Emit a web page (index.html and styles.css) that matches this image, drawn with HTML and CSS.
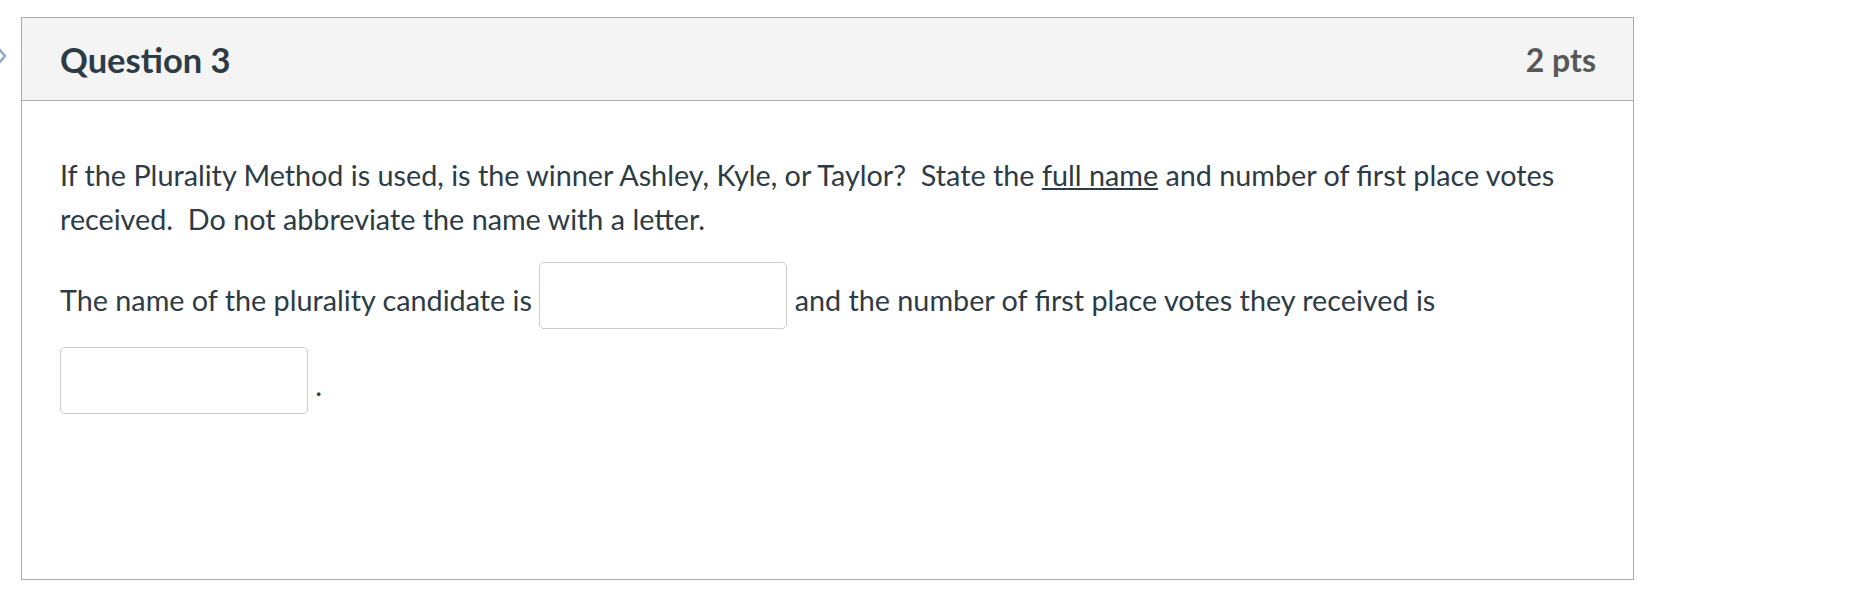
FILE: index.html
```html
<!DOCTYPE html>
<html lang="en">
<head>
<meta charset="utf-8">
<title>Question 3</title>
<link rel="stylesheet" href="styles.css">
</head>
<body>
<div class="page">
  <svg class="nav-chevron" width="14" height="22" viewBox="0 0 14 22" aria-hidden="true">
    <path d="M3 3 L10 11 L3 19" fill="none" stroke="#8fa8c4" stroke-width="2.6" stroke-linecap="round" stroke-linejoin="round"/>
  </svg>
  <div class="question">
    <div class="question-header">
      <span class="question-name">Question 3</span>
      <span class="question-points">2 pts</span>
    </div>
    <div class="question-text">
      <p class="para">If the Plurality Method is used, is the winner Ashley, Kyle, or Taylor?&nbsp; State the <u>full name</u> and number of first place votes received.&nbsp; Do not abbreviate the name with a letter.</p>
      <p class="para para-inputs">The name of the plurality candidate is <input class="blank" type="text" aria-label="Blank 1"> and the number of first place votes they received is <input class="blank" type="text" aria-label="Blank 2"> .</p>
    </div>
  </div>
</div>
</body>
</html>
```
FILE: styles.css
```css
html, body {
  margin: 0;
  padding: 0;
  background: #ffffff;
}

body {
  font-family: Lato, "Open Sans", "Liberation Sans", sans-serif;
  color: #2d3b45;
}

.page {
  position: relative;
  padding: 17px 0 0 21px;
}

.nav-chevron {
  position: absolute;
  left: -5px;
  top: 45px;
}

.question {
  box-sizing: border-box;
  width: 1613px;
  height: 563px;
  border: 1px solid #acacac;
  background: #ffffff;
}

.question-header {
  box-sizing: border-box;
  height: 83px;
  display: flex;
  align-items: center;
  justify-content: space-between;
  padding: 0 37px 0 38px;
  background: #f4f4f4;
  border-bottom: 1px solid #acacac;
}

.question-name {
  font-size: 34.5px;
  font-weight: 700;
  color: #2d3b45;
}

.question-points {
  font-size: 32px;
  font-weight: 700;
  color: #585858;
}

.question-text {
  padding: 52px 38px 0 38px;
  font-size: 28.75px;
  line-height: 44px;
}

.para {
  margin: 0;
}

.para + .para {
  margin-top: 12px;
}

.blank {
  box-sizing: border-box;
  width: 248px;
  height: 67px;
  margin: 9px 0;
  padding: 0 12px;
  border: 1px solid #c7cdd1;
  border-radius: 5px;
  background: #ffffff;
  font-family: inherit;
  font-size: 28px;
  color: #2d3b45;
  vertical-align: 4px;
}
```
